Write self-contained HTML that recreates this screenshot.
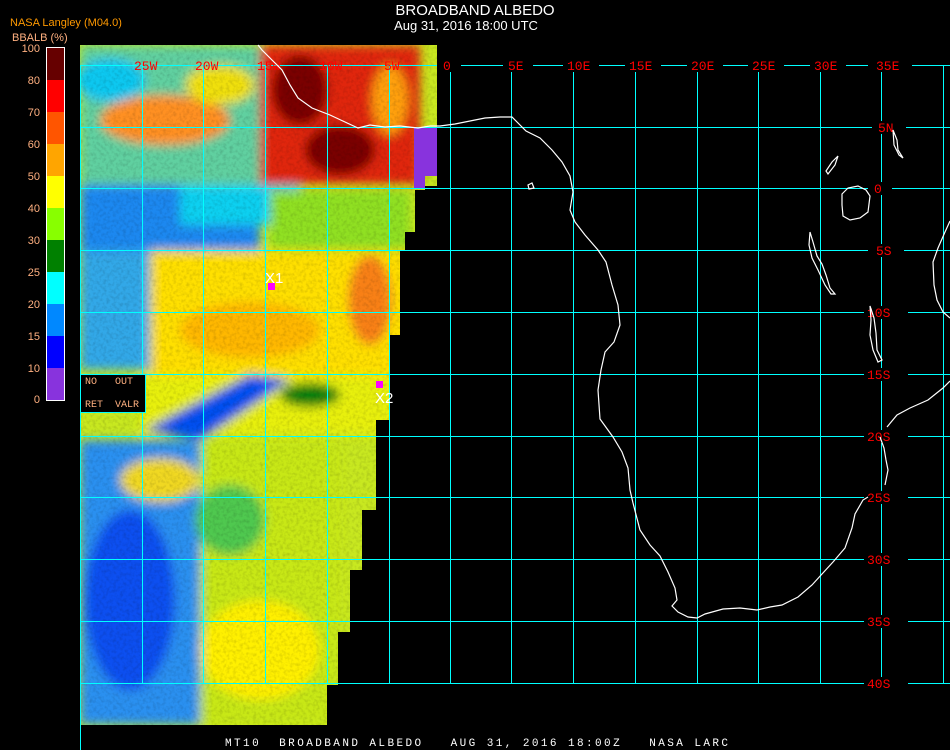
<!DOCTYPE html>
<html><head><meta charset="utf-8"><style>
html,body{margin:0;padding:0;background:#000;width:950px;height:750px;overflow:hidden}
svg{display:block}
</style></head><body>
<svg width="950" height="750" viewBox="0 0 950 750" xmlns="http://www.w3.org/2000/svg" font-family="Liberation Sans, sans-serif">
<defs>
<clipPath id="dc"><polygon points="80,45 437,45 437,186 425,186 425,190 415,190 415,232 405,232 405,250 400,250 400,335 389,335 389,420 376,420 376,510 362,510 362,570 350,570 350,632 338,632 338,685 327,685 327,725 80,725"/></clipPath>
<filter id="bl" x="-20%" y="-20%" width="140%" height="140%"><feGaussianBlur stdDeviation="5"/></filter>
<filter id="nz"><feTurbulence type="fractalNoise" baseFrequency="0.3" numOctaves="2" seed="3"/><feColorMatrix type="matrix" values="0 0 0 0 0  0 0 0 0 0  0 0 0 0 0  0 0 0 -2.2 1.3"/></filter>
</defs>

<g clip-path="url(#dc)">
<rect x="80" y="45" width="360" height="680" fill="#c8e820"/>
<g filter="url(#bl)">
<rect x="80" y="45" width="180" height="145" fill="#60d0a0"/>
<ellipse cx="165" cy="120" rx="65" ry="25" fill="#ff9020"/>
<ellipse cx="110" cy="80" rx="35" ry="22" fill="#10c8f0"/>
<ellipse cx="220" cy="85" rx="35" ry="20" fill="#f0e010"/>
<rect x="260" y="45" width="160" height="140" fill="#e02808"/>
<ellipse cx="300" cy="90" rx="28" ry="35" fill="#7a0000"/>
<ellipse cx="340" cy="150" rx="35" ry="25" fill="#7a0000"/>
<ellipse cx="390" cy="100" rx="18" ry="35" fill="#ffa010"/>
<rect x="80" y="185" width="180" height="65" fill="#1a88f0"/>
<rect x="180" y="185" width="120" height="40" fill="#10d0f0"/>
<rect x="270" y="190" width="140" height="60" fill="#90e020"/>
<rect x="80" y="250" width="70" height="120" fill="#30a8e8"/>
<rect x="150" y="250" width="260" height="125" fill="#ffe000"/>
<ellipse cx="250" cy="330" rx="70" ry="28" fill="#ffb800"/>
<ellipse cx="370" cy="300" rx="22" ry="45" fill="#f88018"/>
<rect x="140" y="375" width="260" height="60" fill="#e8f010"/>
<polygon points="145,430 250,375 290,380 200,440" fill="#0050f0"/>
<ellipse cx="310" cy="395" rx="30" ry="12" fill="#008010"/>
<rect x="80" y="440" width="120" height="285" fill="#2a90f0"/>
<ellipse cx="130" cy="600" rx="45" ry="90" fill="#1050f0"/>
<rect x="200" y="440" width="140" height="285" fill="#c8e818"/>
<ellipse cx="230" cy="520" rx="35" ry="35" fill="#50c850"/>
<ellipse cx="260" cy="650" rx="60" ry="50" fill="#fff000"/>
<ellipse cx="160" cy="480" rx="40" ry="22" fill="#f0d820"/>
</g>
<rect x="80" y="45" width="360" height="680" filter="url(#nz)" opacity="0.12" fill="#000"/>
</g>
<polygon points="414,128 437,128 437,176 425,176 425,188 414,188" fill="#8833dd"/>

<g stroke="#00ffff" stroke-width="1" shape-rendering="crispEdges">
<line x1="80.5" y1="65" x2="80.5" y2="750"/>
<line x1="142.5" y1="65" x2="142.5" y2="683"/>
<line x1="203.5" y1="65" x2="203.5" y2="683"/>
<line x1="265.5" y1="65" x2="265.5" y2="683"/>
<line x1="327.5" y1="65" x2="327.5" y2="683"/>
<line x1="389.5" y1="65" x2="389.5" y2="683"/>
<line x1="450.5" y1="65" x2="450.5" y2="683"/>
<line x1="511.5" y1="65" x2="511.5" y2="683"/>
<line x1="573.5" y1="65" x2="573.5" y2="683"/>
<line x1="635.5" y1="65" x2="635.5" y2="683"/>
<line x1="697.5" y1="65" x2="697.5" y2="683"/>
<line x1="758.5" y1="65" x2="758.5" y2="683"/>
<line x1="820.5" y1="65" x2="820.5" y2="683"/>
<line x1="881.5" y1="65" x2="881.5" y2="683"/>
<line x1="943.5" y1="65" x2="943.5" y2="683"/>
<line x1="80" y1="65.5" x2="950" y2="65.5"/>
<line x1="80" y1="127.5" x2="950" y2="127.5"/>
<line x1="80" y1="188.5" x2="950" y2="188.5"/>
<line x1="80" y1="250.5" x2="950" y2="250.5"/>
<line x1="80" y1="312.5" x2="950" y2="312.5"/>
<line x1="80" y1="374.5" x2="950" y2="374.5"/>
<line x1="80" y1="436.5" x2="950" y2="436.5"/>
<line x1="80" y1="497.5" x2="950" y2="497.5"/>
<line x1="80" y1="559.5" x2="950" y2="559.5"/>
<line x1="80" y1="621.5" x2="950" y2="621.5"/>
<line x1="80" y1="683.5" x2="950" y2="683.5"/>
</g>

<g fill="#000">
<rect x="437" y="59" width="24" height="13"/>
<rect x="503" y="59" width="30" height="13"/>
<rect x="563" y="59" width="36" height="13"/>
<rect x="625" y="59" width="36" height="13"/>
<rect x="687" y="59" width="36" height="13"/>
<rect x="748" y="59" width="36" height="13"/>
<rect x="810" y="59" width="36" height="13"/>
<rect x="868" y="59" width="44" height="13"/>
<rect x="872" y="121" width="34" height="13"/>
<rect x="868" y="182" width="24" height="13"/>
<rect x="868" y="244" width="36" height="13"/>
<rect x="864" y="306" width="44" height="13"/>
<rect x="864" y="368" width="44" height="13"/>
<rect x="864" y="430" width="44" height="13"/>
<rect x="864" y="491" width="44" height="13"/>
<rect x="864" y="553" width="44" height="13"/>
<rect x="864" y="615" width="44" height="13"/>
<rect x="864" y="677" width="44" height="13"/>
</g>
<g fill="#ff0000" font-family="Liberation Mono, monospace" font-size="13">
<text x="134" y="70">25W</text><text x="195" y="70">20W</text><text x="257" y="70">15W</text>
<text x="319" y="70">10W</text><text x="384" y="70">5W</text>
<text x="443" y="70">0</text><text x="508" y="70">5E</text><text x="567" y="70">10E</text>
<text x="629" y="70">15E</text><text x="691" y="70">20E</text><text x="752" y="70">25E</text>
<text x="814" y="70">30E</text><text x="876" y="70">35E</text>
<text x="878" y="132">5N</text><text x="874" y="193">0</text><text x="876" y="255">5S</text>
<text x="867" y="317">10S</text><text x="867" y="379">15S</text><text x="867" y="441">20S</text>
<text x="867" y="502">25S</text><text x="867" y="564">30S</text><text x="867" y="626">35S</text>
<text x="867" y="688">40S</text>
</g>

<g fill="none" stroke="#fff" stroke-width="1.2">
<path d="M258,45 L262,50 L270,58 L282,70 L290,85 L298,98 L312,108 L330,115 L345,122 L358,128 L370,125 L385,127 L400,126 L418,128 L430,126 L440,126 L455,124 L470,121 L485,118 L500,117 L512,117 L520,125 L526,131 L540,138 L552,150 L562,162 L570,176 L573,192 L570,210 L575,222 L585,235 L598,250 L606,262 L612,285 L618,305 L620,325 L614,342 L605,352 L601,370 L598,390 L600,419 L613,437 L622,452 L628,468 L630,490 L633,503 L640,530 L650,545 L660,556 L668,572 L675,588 L677,600 L672,606 L678,612 L688,617 L697,618 L705,614 L723,609 L740,608 L757,610 L770,607 L782,605 L798,597 L812,585 L822,574 L833,562 L845,548 L852,528 L855,514 L863,500 L868,497"/>
<path d="M880,437 L884,448 L886,460 L888,470 L885,485"/>
<path d="M887,427 L897,415 L910,408 L928,400 L943,388 L950,381"/>
<path d="M950,221 L945,232 L938,248 L933,262 L934,285 L937,300 L943,312 L950,318"/>
<path d="M842,194 L848,188 L858,186 L866,190 L870,196 L868,212 L860,218 L850,220 L843,216 L842,205 Z"/>
<path d="M810,232 L813,242 L817,256 L822,264 L826,275 L830,288 L835,294 L831,294 L825,285 L818,270 L812,258 L809,245 Z"/>
<path d="M870,306 L874,318 L876,333 L877,350 L882,360 L878,362 L873,350 L870,335 L871,320 Z"/>
<path d="M893,130 L897,140 L898,150 L903,158 L899,155 L894,145 Z"/>
<path d="M838,156 L835,165 L828,174 L826,171 L832,162 Z"/>
<path d="M528,185 L532,183 L534,188 L529,189 Z"/>
</g>

<rect x="268" y="283" width="7" height="7" fill="#ff00ff"/>
<text x="265" y="283" fill="#fff" font-size="15">X1</text>
<rect x="376" y="381" width="7" height="7" fill="#ff00ff"/>
<text x="375" y="403" fill="#fff" font-size="15">X2</text>

<rect x="80.5" y="374.5" width="65" height="38" fill="#000" stroke="#00ffff"/>
<g fill="#ffb080" font-family="Liberation Mono, monospace" font-size="10">
<text x="85" y="384">NO</text><text x="115" y="384">OUT</text>
<text x="85" y="407">RET</text><text x="115" y="407">VALR</text>
</g>

<text x="10" y="26" fill="#ff9900" font-size="11">NASA Langley (M04.0)</text>
<text x="12" y="41" fill="#ffb080" font-size="11">BBALB (%)</text>
<g shape-rendering="crispEdges">
<rect x="47" y="48" width="17" height="32" fill="#660000"/>
<rect x="47" y="80" width="17" height="32" fill="#ff0000"/>
<rect x="47" y="112" width="17" height="32" fill="#ff5500"/>
<rect x="47" y="144" width="17" height="32" fill="#ffa500"/>
<rect x="47" y="176" width="17" height="32" fill="#ffff00"/>
<rect x="47" y="208" width="17" height="32" fill="#88ff00"/>
<rect x="47" y="240" width="17" height="32" fill="#008000"/>
<rect x="47" y="272" width="17" height="32" fill="#00ffff"/>
<rect x="47" y="304" width="17" height="32" fill="#0088ff"/>
<rect x="47" y="336" width="17" height="32" fill="#0000ff"/>
<rect x="47" y="368" width="17" height="32" fill="#8833dd"/>
<rect x="46.5" y="47.5" width="18" height="353" fill="none" stroke="#fff"/>
</g>
<g fill="#ffb080" font-size="11" text-anchor="end">
<text x="40" y="52">100</text><text x="40" y="84">80</text><text x="40" y="116">70</text>
<text x="40" y="148">60</text><text x="40" y="180">50</text><text x="40" y="212">40</text>
<text x="40" y="244">30</text><text x="40" y="276">25</text><text x="40" y="308">20</text>
<text x="40" y="340">15</text><text x="40" y="372">10</text><text x="40" y="403">0</text>
</g>

<text x="475" y="15" fill="#fff" font-size="15" text-anchor="middle">BROADBAND ALBEDO</text>
<text x="466" y="30" fill="#fff" font-size="13" text-anchor="middle">Aug 31, 2016 18:00 UTC</text>
<text x="225" y="746" fill="#fff" font-size="11" font-family="Liberation Mono, monospace" xml:space="preserve" textLength="503">MT10  BROADBAND ALBEDO   AUG 31, 2016 18:00Z   NASA LARC</text>
</svg>
</body></html>
